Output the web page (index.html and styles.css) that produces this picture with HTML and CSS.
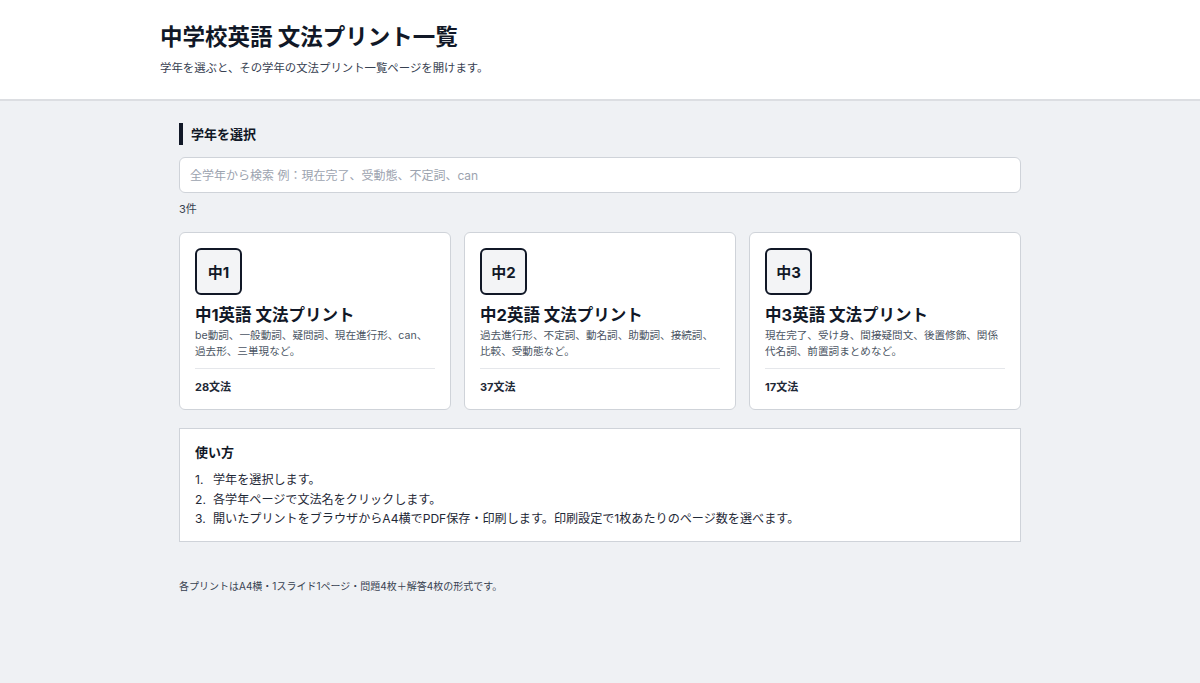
FILE: index.html
```html
<!DOCTYPE html>
<html lang="ja">
<head>
<meta charset="utf-8">
<title>中学校英語 文法プリント一覧</title>
<link rel="stylesheet" href="styles.css">
</head>
<body>
<header class="site-header">
  <div class="header-inner">
    <h1 class="title">中学校英語 文法プリント一覧</h1>
    <p class="subtitle">学年を選ぶと、その学年の文法プリント一覧ページを開けます。</p>
  </div>
</header>
<main class="main">
  <h2 class="section-title">学年を選択</h2>
  <input class="search" type="text" placeholder="全学年から検索 例：現在完了、受動態、不定詞、can">
  <p class="count">3件</p>
  <div class="cards">
    <a class="card" href="#">
      <div class="badge">中1</div>
      <h3 class="card-title">中1英語 文法プリント</h3>
      <p class="card-desc">be動詞、一般動詞、疑問詞、現在進行形、can、過去形、三単現など。</p>
      <div class="card-meta">28文法</div>
    </a>
    <a class="card" href="#">
      <div class="badge">中2</div>
      <h3 class="card-title">中2英語 文法プリント</h3>
      <p class="card-desc">過去進行形、不定詞、動名詞、助動詞、接続詞、比較、受動態など。</p>
      <div class="card-meta">37文法</div>
    </a>
    <a class="card" href="#">
      <div class="badge">中3</div>
      <h3 class="card-title">中3英語 文法プリント</h3>
      <p class="card-desc">現在完了、受け身、間接疑問文、後置修飾、関係代名詞、前置詞まとめなど。</p>
      <div class="card-meta">17文法</div>
    </a>
  </div>
  <section class="usage">
    <h3 class="usage-title">使い方</h3>
    <ol class="usage-list">
      <li>学年を選択します。</li>
      <li>各学年ページで文法名をクリックします。</li>
      <li>開いたプリントをブラウザからA4横でPDF保存・印刷します。印刷設定で1枚あたりのページ数を選べます。</li>
    </ol>
  </section>
  <p class="note">各プリントはA4横・1スライド1ページ・問題4枚＋解答4枚の形式です。</p>
</main>
</body>
</html>
```
FILE: styles.css
```css
* { box-sizing: border-box; }
html, body { margin: 0; padding: 0; }
body {
  background: #eff1f4;
  font-family: "Inter", "Noto Sans CJK JP", sans-serif;
  color: #111827;
}
.site-header {
  background: #ffffff;
  border-bottom: 2px solid #dcdee2;
  height: 101px;
}
.header-inner {
  width: 880px;
  margin: 0 auto;
  padding-top: 21px;
}
.title {
  margin: 0;
  font-size: 22.5px;
  line-height: 32px;
  font-weight: 700;
  color: #111827;
}
.subtitle {
  margin: 7px 0 0;
  font-size: 11.4px;
  line-height: 16px;
  color: #374151;
}
.main {
  width: 842px;
  margin: 0 auto;
  padding-top: 22px;
}
.section-title {
  margin: 0;
  border-left: 4px solid #111827;
  padding-left: 8px;
  font-size: 13px;
  line-height: 22px;
  font-weight: 700;
}
.search {
  display: block;
  width: 100%;
  height: 36px;
  margin-top: 12px;
  border: 1px solid #cfd3d9;
  border-radius: 6px;
  background: #fff;
  padding: 0 10px;
  font-family: inherit;
  font-size: 12px;
  color: #111827;
  outline: none;
}
.search::placeholder { color: #9ca3af; }
.count {
  margin: 8px 0 0;
  font-size: 11px;
  line-height: 16px;
  color: #374151;
}
.cards {
  display: grid;
  grid-template-columns: repeat(3, 1fr);
  gap: 13px;
  margin-top: 15px;
}
.card {
  display: block;
  background: #fff;
  border: 1px solid #cfd3d9;
  border-radius: 6px;
  padding: 15px 15px 15px;
  height: 178px;
  text-decoration: none;
  color: inherit;
}
.badge {
  width: 47px;
  height: 47px;
  border: 2px solid #111827;
  border-radius: 6px;
  background: #f3f4f6;
  display: flex;
  align-items: center;
  justify-content: center;
  font-size: 15px;
  font-weight: 700;
}
.card-title {
  margin: 8px 0 0;
  font-size: 16.5px;
  line-height: 24px;
  font-weight: 700;
}
.card-desc {
  margin: 1px 0 0;
  font-size: 10.6px;
  line-height: 16px;
  color: #4b5563;
  height: 32px;
}
.card-meta {
  margin-top: 8px;
  border-top: 1px solid #e5e7eb;
  padding-top: 10px;
  font-size: 11px;
  line-height: 16px;
  font-weight: 700;
  color: #1f2937;
}
.usage {
  margin-top: 18px;
  background: #fff;
  border: 1px solid #cfd3d9;
  padding: 13px 15px 12px;
}
.usage-title {
  margin: 0;
  font-size: 13px;
  line-height: 20px;
  font-weight: 700;
}
.usage-list {
  margin: 8px 0 0;
  padding: 0;
  list-style: none;
  counter-reset: step;
  font-size: 12.1px;
  line-height: 19.5px;
  color: #1f2937;
}
.usage-list li {
  counter-increment: step;
  display: flex;
}
.usage-list li::before {
  content: counter(step) ".";
  width: 18px;
  flex: none;
}
.note {
  margin: 36px 0 0;
  font-size: 10px;
  line-height: 16px;
  color: #374151;
}
```
